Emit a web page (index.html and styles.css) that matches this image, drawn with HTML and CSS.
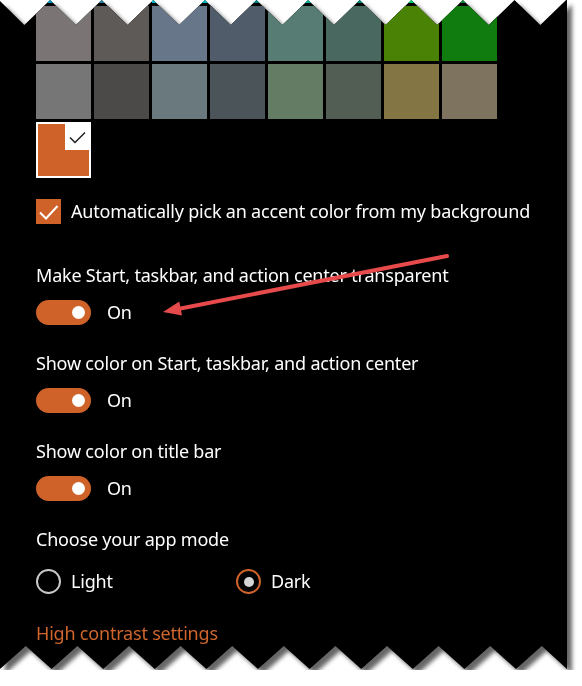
FILE: index.html
```html
<!DOCTYPE html>
<html lang="en">
<head>
	<meta charset="UTF-8">
	<title>Colors</title>
	<link rel="stylesheet" href="styles.css">
</head>
<body>
	<div class="sheet">
		<div class="panel">
			<div class="swatches">
				<span class="swatch" style="background:#0099bc"></span>
				<span class="swatch" style="background:#2d7d9a"></span>
				<span class="swatch" style="background:#00b7c3"></span>
				<span class="swatch" style="background:#038387"></span>
				<span class="swatch" style="background:#00b294"></span>
				<span class="swatch" style="background:#018574"></span>
				<span class="swatch" style="background:#00cc6a"></span>
				<span class="swatch" style="background:#10893e"></span>
				<span class="swatch" style="background:#7a7574"></span>
				<span class="swatch" style="background:#5d5a58"></span>
				<span class="swatch" style="background:#68768a"></span>
				<span class="swatch" style="background:#515c6b"></span>
				<span class="swatch" style="background:#567c73"></span>
				<span class="swatch" style="background:#486860"></span>
				<span class="swatch" style="background:#498205"></span>
				<span class="swatch" style="background:#107c10"></span>
				<span class="swatch" style="background:#767676"></span>
				<span class="swatch" style="background:#4c4a48"></span>
				<span class="swatch" style="background:#69797e"></span>
				<span class="swatch" style="background:#4a5459"></span>
				<span class="swatch" style="background:#647c64"></span>
				<span class="swatch" style="background:#525e54"></span>
				<span class="swatch" style="background:#847545"></span>
				<span class="swatch" style="background:#7e735f"></span>
			</div>

			<div class="picked">
				<span class="tick">
					<svg width="24" height="26" viewBox="0 0 24 26"><polyline points="5,13.5 10,18.5 20,8.5" fill="none" stroke="#1a1a1a" stroke-width="1.4"/></svg>
				</span>
			</div>

			<div class="check-row">
				<span class="checkbox">
					<svg width="25" height="25" viewBox="0 0 25 25"><polyline points="4,13.5 10,19.5 21.5,7" fill="none" stroke="#fff" stroke-width="2"/></svg>
				</span>
				<span class="text">Automatically pick an accent color from my background</span>
			</div>

			<div class="setting">
				<div class="label">Make Start, taskbar, and action center transparent</div>
				<div class="toggle-row"><span class="toggle"><span class="knob"></span></span><span class="text">On</span></div>
			</div>

			<div class="setting">
				<div class="label">Show color on Start, taskbar, and action center</div>
				<div class="toggle-row"><span class="toggle"><span class="knob"></span></span><span class="text">On</span></div>
			</div>

			<div class="setting">
				<div class="label">Show color on title bar</div>
				<div class="toggle-row"><span class="toggle"><span class="knob"></span></span><span class="text">On</span></div>
			</div>

			<div class="setting">
				<div class="label">Choose your app mode</div>
				<div class="radios">
					<div class="radio-opt"><span class="radio"></span><span class="text">Light</span></div>
					<div class="radio-opt"><span class="radio on"></span><span class="text">Dark</span></div>
				</div>
			</div>

			<a href="javascript:;" class="link">High contrast settings</a>

			<!-- red callout arrow drawn over the screenshot -->
			<svg class="arrow" width="567" height="670" viewBox="0 0 567 670">
				<line x1="447" y1="256" x2="178" y2="309" stroke="#e64a4a" stroke-width="4" stroke-linecap="round"/>
				<polygon points="163,312 182,315.6 179.3,301.4" fill="#e64a4a"/>
			</svg>
		</div>
	</div>
</body>
</html>
```

FILE: styles.css
```css
body{
	margin: 0;
	background: #fff;
	font-family: "Noto Sans", "Open Sans", sans-serif;
	color: #fff;
}

.sheet{
	width: 567px;
	filter: drop-shadow(5px 5px 2px rgba(0,0,0,0.6));
}

.panel{
	position: relative;
	height: 670px;
	padding-left: 36px;
	box-sizing: border-box;
	background: #000;
	font-size: 18px;
	line-height: 24px;
	letter-spacing: -0.2px;
	overflow: hidden;
	/* torn paper edges, top and bottom */
	clip-path: polygon(
		0 1px, 24.3px 25px, 50.1px 0, 75.9px 25px, 101.7px 0, 127.5px 25px, 153.3px 0,
		179.1px 25px, 204.9px 0, 230.7px 25px, 256.5px 0, 282.3px 25px, 308.1px 0,
		333.9px 25px, 359.7px 0, 385.5px 25px, 411.3px 0, 437.1px 25px, 462.9px 0,
		488.7px 25px, 514.5px 0, 540.3px 25px, 566.1px 0, 567px 0,
		567px 669px, 541.8px 646px, 516px 669px, 490.2px 646px, 464.4px 669px,
		438.6px 646px, 412.8px 669px, 387px 646px, 361.2px 669px, 335.4px 646px,
		309.6px 669px, 283.8px 646px, 258px 669px, 232.2px 646px, 206.4px 669px,
		180.6px 646px, 154.8px 669px, 129px 646px, 103.2px 669px, 77.4px 646px,
		51.6px 669px, 25.8px 646px, 0 669px
	);
}

.swatches{
	display: grid;
	grid-template-columns: repeat(8, 55px);
	grid-auto-rows: 55px;
	gap: 3px;
	margin-top: -52px;
}

.picked{
	position: relative;
	width: 51px;
	height: 52px;
	margin-top: 3px;
	border: 2px solid #fff;
	background: #cf6229;
}

.picked .tick{
	position: absolute;
	top: 0;
	right: 0;
	width: 24px;
	height: 26px;
	background: #fff;
}

.picked svg{ display: block; }

.check-row{
	display: flex;
	align-items: center;
	gap: 10px;
	margin-top: 21px;
	height: 25px;
}

.check-row .text{
	margin-top: -2px;
}

.checkbox{
	width: 25px;
	height: 25px;
	background: #cf6229;
}

.checkbox svg{ display: block; }

.setting{
	margin-top: 39px;
}

.setting + .setting{
	margin-top: 26px;
}

.toggle-row{
	display: flex;
	align-items: center;
	gap: 16px;
	margin-top: 13px;
	height: 25px;
}

.toggle-row .text,
.radio-opt .text{
	margin-top: -2px;
}

.toggle{
	display: flex;
	align-items: center;
	justify-content: flex-end;
	width: 55px;
	height: 25px;
	padding-right: 6px;
	box-sizing: border-box;
	border-radius: 13px;
	background: #cf6229;
}

.knob{
	width: 13px;
	height: 13px;
	border-radius: 50%;
	background: #fff;
}

.radios{
	display: flex;
	margin-top: 18px;
}

.radio-opt{
	display: flex;
	align-items: center;
	gap: 10px;
	width: 200px;
	height: 25px;
}

.radio{
	display: flex;
	align-items: center;
	justify-content: center;
	width: 25px;
	height: 25px;
	box-sizing: border-box;
	border: 2.5px solid #c8c8c8;
	border-radius: 50%;
}

.radio.on{
	border-color: #cf6229;
}

.radio.on:after{
	content: "";
	width: 10px;
	height: 10px;
	border-radius: 50%;
	background: #d6d6d6;
}

.link{
	display: block;
	margin-top: 27px;
	color: #d0662c;
	text-decoration: none;
}

.arrow{
	position: absolute;
	left: 0;
	top: 0;
}
```
